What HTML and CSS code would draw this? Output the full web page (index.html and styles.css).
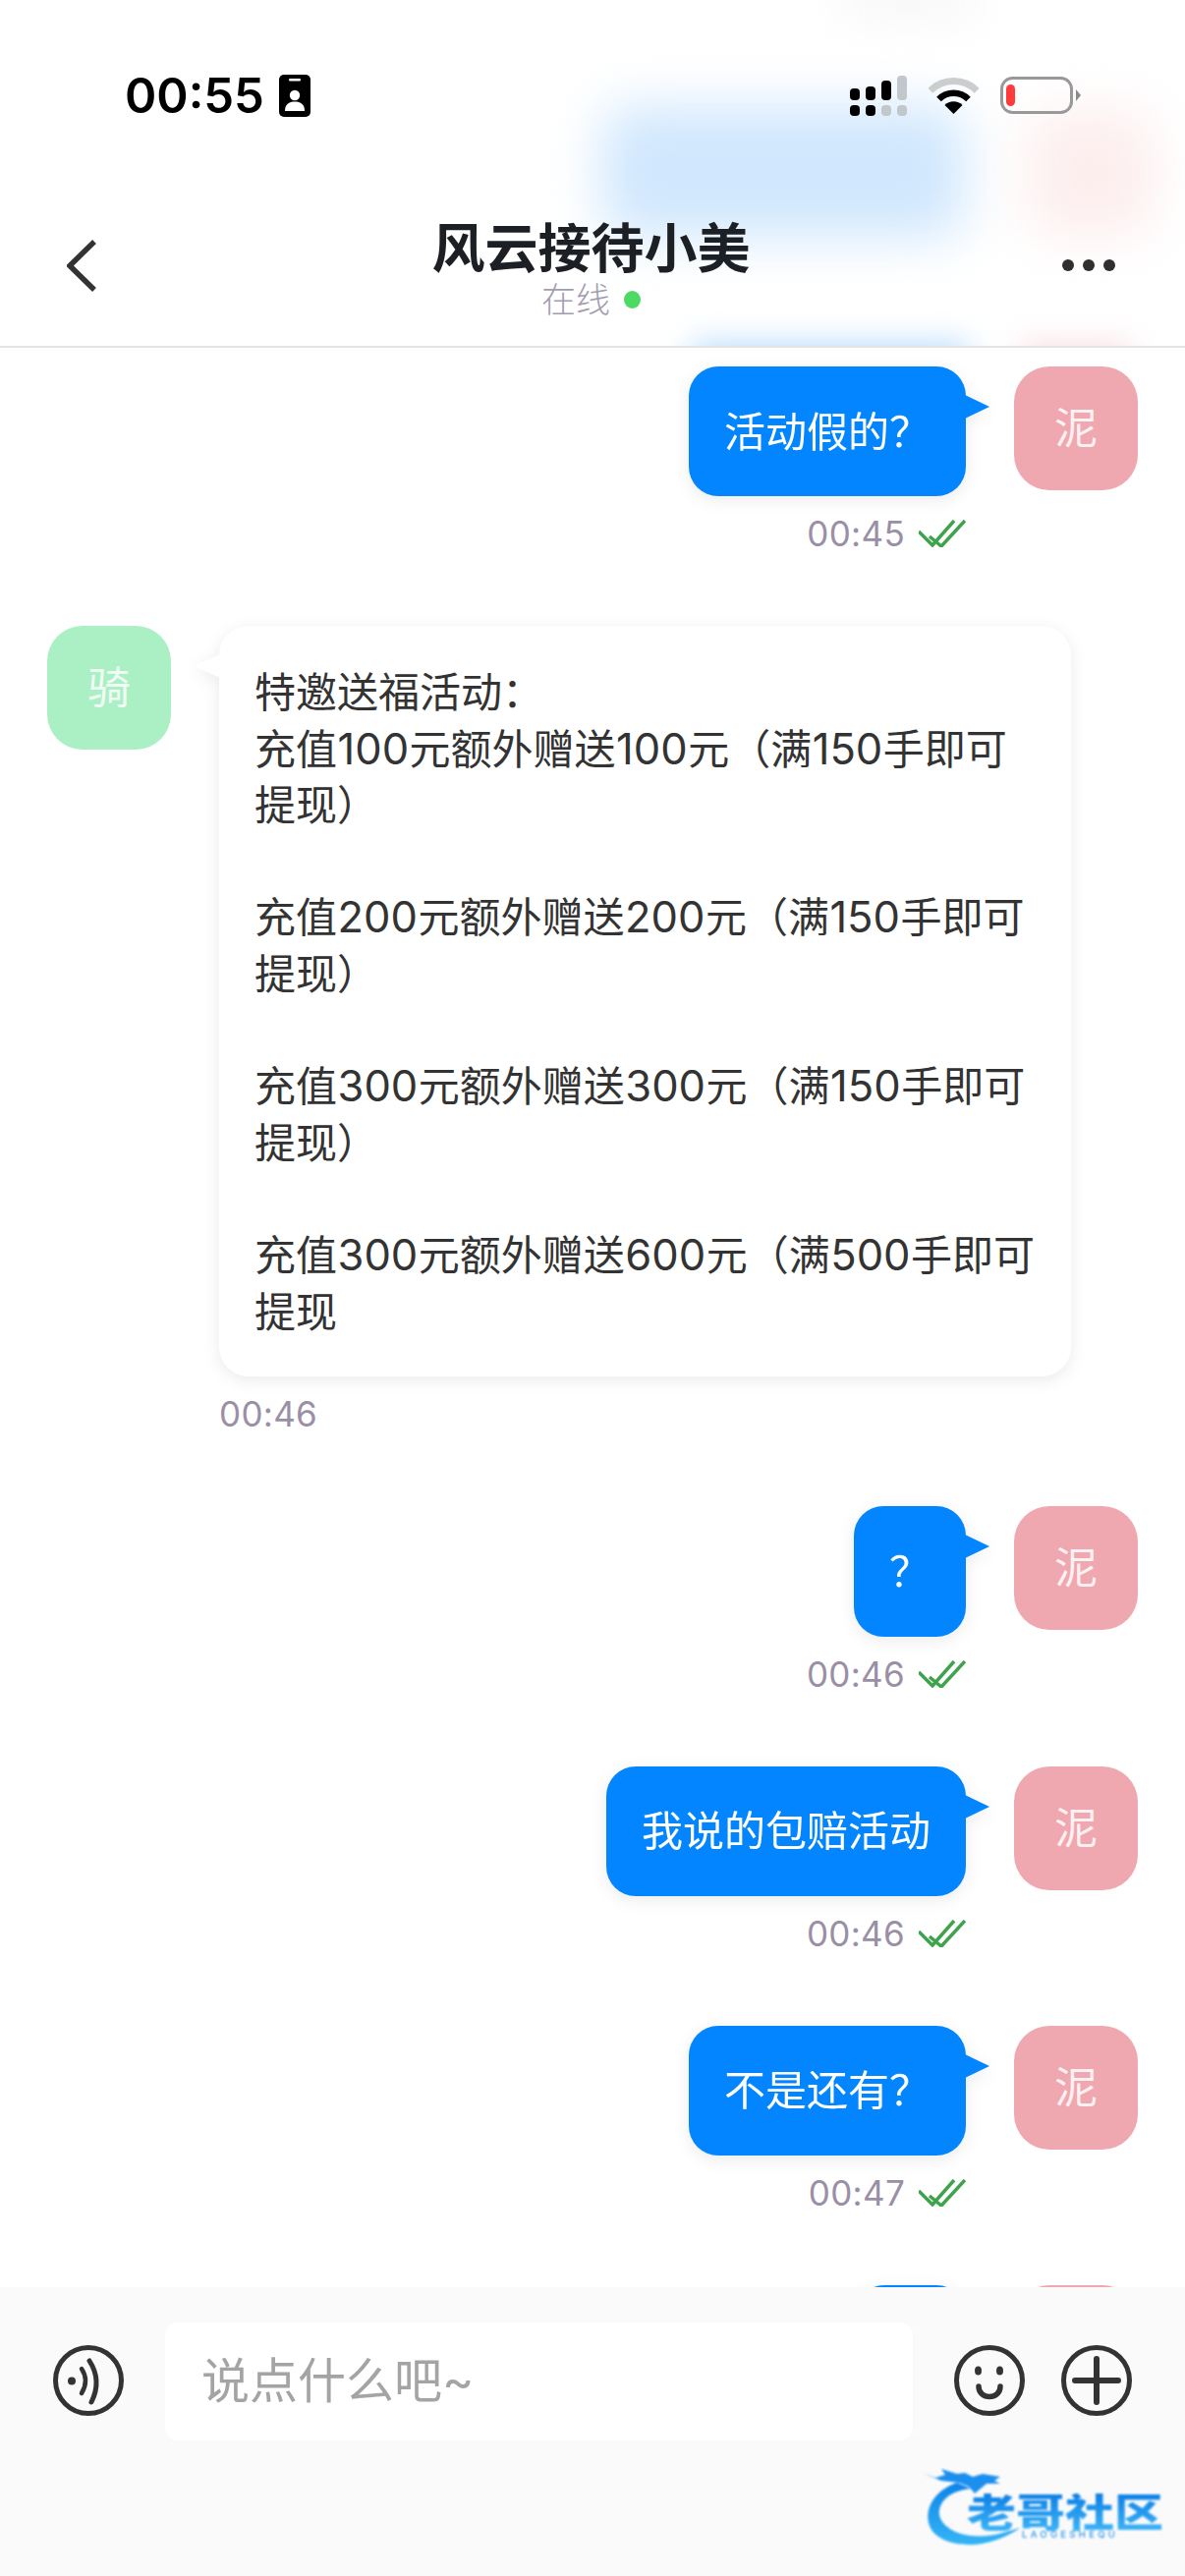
FILE: index.html
```html
<!DOCTYPE html>
<html lang="zh-CN">
<head>
<meta charset="utf-8">
<title>风云接待小美</title>
<link rel="stylesheet" href="styles.css">
</head>
<body>
<div class="app">
  <header class="header">
    <div class="blobs" aria-hidden="true">
      <div class="blob blob-top"></div>
      <div class="blob blob-blue"></div>
      <div class="blob blob-pink"></div>
      <div class="blob blob-blue2"></div>
      <div class="blob blob-pink2"></div>
    </div>
    <div class="status">
      <div class="status-left">
        <span class="clock">00:55</span>
        <svg class="id-icon" viewBox="0 0 32 43"><rect width="32" height="43" rx="5" fill="#000"/><rect x="10" y="4" width="12" height="2.6" rx="1.3" fill="#fff"/><circle cx="16" cy="21" r="5.2" fill="#fff"/><path d="M6 37c0-7 4-9.500 10-9.500s10 2.500 10 9.500z" fill="#fff"/></svg>
      </div>
      <div class="status-right">
        <svg class="signal" viewBox="0 0 58 41">
          <rect x="0" y="13" width="10" height="12" rx="4" fill="#000"/><rect x="16" y="11" width="10" height="14" rx="4" fill="#000"/><rect x="32" y="5" width="10" height="20" rx="4" fill="#000"/><rect x="48" y="0" width="10" height="25" rx="4" fill="#c2c7cc"/>
          <rect x="0" y="30" width="10" height="11" rx="4" fill="#000"/><rect x="16" y="30" width="10" height="11" rx="4" fill="#000"/><rect x="32" y="30" width="10" height="11" rx="4" fill="#c2c7cc"/><rect x="48" y="30" width="10" height="11" rx="4" fill="#c2c7cc"/>
        </svg>
        <svg class="wifi" viewBox="0 0 51 38">
          <path d="M1.800 14.300A33.500 33.500 0 0 1 49.200 14.300" fill="none" stroke="#cdcdcd" stroke-width="7"/>
          <path d="M10.500 23A21.200 21.200 0 0 1 40.500 23" fill="none" stroke="#000" stroke-width="6.500"/>
          <path d="M25.500 38L16.500 29A12.700 12.700 0 0 1 34.500 29Z" fill="#000"/>
        </svg>
        <svg class="battery" viewBox="0 0 82 38">
          <rect x="1.500" y="1.500" width="71" height="35" rx="11" fill="none" stroke="#999" stroke-width="3"/>
          <rect x="6" y="8" width="9" height="22" rx="4.500" fill="#ff3b3b"/>
          <path d="M77 13L82 19L77 25Z" fill="#8a8a8a"/>
        </svg>
      </div>
    </div>
    <nav class="nav">
      <svg class="back" viewBox="0 0 31 53"><path d="M28 2L3 26.500L28 51" fill="none" stroke="#333" stroke-width="5.500"/></svg>
      <div class="title-block">
        <div class="title">风云接待小美</div>
        <div class="presence"><span>在线</span><i class="dot"></i></div>
      </div>
      <div class="more"><i></i><i></i><i></i></div>
    </nav>
  </header>

  <main class="list">
    <div class="msg out">
      <div class="col">
        <div class="bubble blue">活动假的？</div>
        <div class="meta"><span class="time">00:45</span><svg class="check" viewBox="0 0 48 28"><path d="M0 12L14 26L36 1M11 17L23 27L47 1" fill="none" stroke="#3fa34d" stroke-width="3.500"/></svg></div>
      </div>
      <div class="avatar pink">泥</div>
    </div>

    <div class="msg in">
      <div class="avatar green">骑</div>
      <div class="col">
        <div class="bubble white">特邀送福活动：<br>充值<span class="n">100</span>元额外赠送<span class="n">100</span>元（满<span class="n">150</span>手即可<br>提现）<br><br>充值<span class="n">200</span>元额外赠送<span class="n">200</span>元（满<span class="n">150</span>手即可<br>提现）<br><br>充值<span class="n">300</span>元额外赠送<span class="n">300</span>元（满<span class="n">150</span>手即可<br>提现）<br><br>充值<span class="n">300</span>元额外赠送<span class="n">600</span>元（满<span class="n">500</span>手即可<br>提现</div>
        <div class="meta"><span class="time">00:46</span></div>
      </div>
    </div>

    <div class="msg out">
      <div class="col">
        <div class="bubble blue">？</div>
        <div class="meta"><span class="time">00:46</span><svg class="check" viewBox="0 0 48 28"><path d="M0 12L14 26L36 1M11 17L23 27L47 1" fill="none" stroke="#3fa34d" stroke-width="3.500"/></svg></div>
      </div>
      <div class="avatar pink">泥</div>
    </div>

    <div class="msg out">
      <div class="col">
        <div class="bubble blue">我说的包赔活动</div>
        <div class="meta"><span class="time">00:46</span><svg class="check" viewBox="0 0 48 28"><path d="M0 12L14 26L36 1M11 17L23 27L47 1" fill="none" stroke="#3fa34d" stroke-width="3.500"/></svg></div>
      </div>
      <div class="avatar pink">泥</div>
    </div>

    <div class="msg out">
      <div class="col">
        <div class="bubble blue">不是还有？</div>
        <div class="meta"><span class="time">00:47</span><svg class="check" viewBox="0 0 48 28"><path d="M0 12L14 26L36 1M11 17L23 27L47 1" fill="none" stroke="#3fa34d" stroke-width="3.500"/></svg></div>
      </div>
      <div class="avatar pink">泥</div>
    </div>

    <div class="msg out">
      <div class="col">
        <div class="bubble blue peek"></div>
      </div>
      <div class="avatar pink"></div>
    </div>
  </main>

  <footer class="footer">
    <svg class="tool" viewBox="0 0 72 72"><circle cx="36" cy="36" r="33.500" fill="none" stroke="#333" stroke-width="5"/><circle cx="19" cy="36.500" r="4" fill="#333"/><path d="M29 24Q37 36 29 49" fill="none" stroke="#333" stroke-width="4.500" stroke-linecap="round"/><path d="M37 16Q50 36 39 58" fill="none" stroke="#333" stroke-width="5" stroke-linecap="round"/></svg>
    <div class="input">说点什么吧~</div>
    <svg class="tool" viewBox="0 0 72 72"><circle cx="36" cy="36" r="33.500" fill="none" stroke="#333" stroke-width="5"/><ellipse cx="24.500" cy="26" rx="3.500" ry="4.500" fill="#333"/><ellipse cx="46.500" cy="26" rx="3.500" ry="4.500" fill="#333"/><path d="M25 42C25 56 47 56 47 42" fill="none" stroke="#333" stroke-width="5.500" stroke-linecap="round"/></svg>
    <svg class="tool tool-last" viewBox="0 0 72 72"><circle cx="36" cy="36" r="33.500" fill="none" stroke="#333" stroke-width="5"/><path d="M14 36H58M36 14V58" fill="none" stroke="#333" stroke-width="6" stroke-linecap="round"/></svg>
  </footer>

  <div class="logo" aria-label="老哥社区">
    <svg class="logo-mark" viewBox="0 0 120 80">
      <defs><linearGradient id="lg" x1="0" y1="0" x2="0" y2="1"><stop offset="0" stop-color="#0d84e8"/><stop offset="1" stop-color="#36b5f5"/></linearGradient></defs>
      <path d="M36 14C12 22 2 42 8 58C14 74 40 80 62 76C78 73 92 66 100 60C86 64 70 70 50 68C30 66 16 54 18 42C20 30 32 22 50 20Z" fill="url(#lg)"/>
      <path d="M0 4L14 9L24 6L20 0L36 5L44 4L52 8L62 5L80 8L74 12L80 15L66 15L60 20L54 25L48 18L38 14L20 12Z" fill="#1b8fee"/>
    </svg>
    <div class="logo-cn">老哥社区</div>
    <div class="logo-en">LAOGESHEQU</div>
  </div>
</div>
</body>
</html>
```
FILE: styles.css
```css
* { box-sizing: border-box; }
html, body { margin: 0; padding: 0; }
body {
  width: 1206px;
  height: 2622px;
  overflow: hidden;
  background: #fff;
  font-family: Inter, "Noto Sans CJK SC", sans-serif;
}
.app {
  position: relative;
  width: 1206px;
  height: 2622px;
  display: flex;
  flex-direction: column;
  overflow: hidden;
}

/* header */
.header {
  position: relative;
  height: 354px;
  flex: none;
  border-bottom: 2px solid #e4e4e4;
  overflow: hidden;
  background: #fff;
}
.blobs { position: absolute; inset: 0; }
.blob { position: absolute; }
.blob-top { left: 860px; top: -30px; width: 130px; height: 50px; background: #f7f7f7; filter: blur(22px); }
.blob-blue { left: 612px; top: 108px; width: 370px; height: 134px; border-radius: 30px; background: #d0e7fd; filter: blur(26px); }
.blob-pink { left: 1045px; top: 112px; width: 130px; height: 128px; border-radius: 30px; background: #fdeeee; filter: blur(26px); }
.blob-blue2 { left: 705px; top: 350px; width: 280px; height: 60px; background: #b5dafd; filter: blur(16px); }
.blob-pink2 { left: 1040px; top: 350px; width: 110px; height: 60px; background: #f9dde0; filter: blur(16px); }

.status {
  position: relative;
  height: 194px;
  display: flex;
  align-items: center;
  justify-content: space-between;
  padding: 0 106px 0 127px;
}
.status-left { display: flex; align-items: center; gap: 15px; }
.clock { font-size: 49px; font-weight: 600; line-height: 1; color: #000; }
.id-icon { width: 32px; height: 43px; }
.status-right { display: flex; align-items: center; }
.signal { width: 58px; height: 41px; margin-right: 22px; }
.wifi { width: 51px; height: 38px; margin-right: 22px; }
.battery { width: 82px; height: 38px; }

.nav {
  position: relative;
  display: grid;
  grid-template-columns: 1fr auto 1fr;
  padding: 31px 71px 0 68px;
}
.back { width: 31px; height: 53px; margin-top: 19px; justify-self: start; }
.title-block { display: flex; flex-direction: column; align-items: center; }
.title { font-size: 54px; line-height: 58px; font-weight: 700; color: #1c1f23; }
.presence { display: flex; align-items: center; gap: 14px; margin-top: 2px; font-size: 35px; line-height: 40px; color: #a49cb0; font-weight: 300; }
.dot { width: 17px; height: 18px; border-radius: 50%; background: #4cd964; }
.more { display: flex; gap: 9px; justify-self: end; margin-top: 39px; }
.more i { width: 12px; height: 12px; border-radius: 50%; background: #2f2f2f; }

/* messages */
.list {
  flex: 1;
  min-height: 0;
  overflow: hidden;
  padding: 19px 48px 0;
}
.msg { display: flex; gap: 49px; align-items: flex-start; }
.msg.out { justify-content: flex-end; }
.col { display: flex; flex-direction: column; }
.out .col { align-items: flex-end; }
.in .col { align-items: flex-start; }
.avatar {
  width: 126px;
  height: 126px;
  flex: none;
  border-radius: 36px;
  display: flex;
  align-items: center;
  justify-content: center;
  font-size: 44px;
  line-height: 1;
  color: rgba(255, 255, 255, .85);
  font-weight: 400;
}
.pink { background: #f0a8b0; }
.green { background: #aaf0c4; }
.bubble {
  position: relative;
  padding: 37.500px 36px;
  border-radius: 30px;
  font-size: 42px;
  line-height: 57.300px;
  max-width: 867px;
  filter: drop-shadow(0 4px 8px rgba(0, 0, 0, .08));
}
.bubble::after {
  content: "";
  position: absolute;
  top: 29px;
  border-style: solid;
  border-width: 12.500px 0;
  border-color: transparent;
}
.blue { background: #0385ff; color: #fff; font-weight: 400; }
.blue::after { left: calc(100% - 1px); border-left: 25px solid #0385ff; }
.white { width: 867px; padding-top: 39px; background: #fff; color: #333; font-weight: 400; }
.white::after { right: calc(100% - 1px); border-right: 26px solid #fff; }
.n { font-size: 43.500px; padding: 0 .5px; }
.peek { width: 113px; height: 132px; }
.meta {
  display: flex;
  align-items: center;
  gap: 14px;
  height: 40px;
  margin: 18px 0 74px;
}
.time { font-size: 35px; line-height: 40px; color: #9a8fa6; letter-spacing: .3px; }
.check { width: 48px; height: 28px; }

/* footer */
.footer {
  position: relative;
  z-index: 1;
  height: 294px;
  flex: none;
  background: #fafafa;
  display: flex;
  align-items: flex-start;
  padding: 36px 54px 0;
}
.tool { width: 72px; height: 72px; flex: none; margin-top: 23px; }
.tool-last { margin-left: 37px; }
.input {
  width: 762px;
  height: 120px;
  margin: 0 42px 0 42px;
  padding: 0 37px;
  border-radius: 14px;
  background: #fff;
  color: #a4a4a4;
  font-size: 49px;
  font-weight: 400;
  line-height: 120px;
}

/* watermark */
.logo {
  position: absolute;
  z-index: 2;
  left: 938px;
  top: 2513px;
  width: 250px;
  height: 80px;
  filter: blur(.8px);
}
.logo-mark { position: absolute; left: 0; top: 0; width: 120px; height: 80px; }
.logo-cn {
  position: absolute;
  left: 46px;
  top: 20px;
  font-size: 50px;
  line-height: 50px;
  font-weight: 900;
  white-space: nowrap;
  transform: scaleY(.8);
  background: linear-gradient(#0b7fe6, #3fb6f7);
  -webkit-background-clip: text;
  background-clip: text;
  color: transparent;
}
.logo-en {
  position: absolute;
  left: 102px;
  top: 62px;
  font-size: 9.500px;
  line-height: 10px;
  letter-spacing: 3.300px;
  color: #2b95e8;
  font-weight: 500;
}
```
